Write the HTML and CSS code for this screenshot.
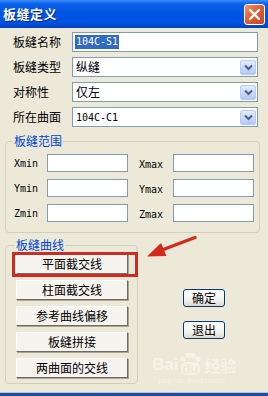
FILE: index.html
```html
<!doctype html>
<html lang="zh">
<head>
    <meta charset="UTF-8">
    <title>板缝定义</title>
	<link rel="stylesheet" href="styles.css">
</head>
<body>
	<div class="window">
		<div class="titlebar">
			<span class="title">板缝定义</span>
			<span class="close">
				<svg width="13" height="13" viewBox="0 0 13 13"><path d="M2 2 L11 11 M11 2 L2 11" stroke="#fff" stroke-width="2.4" stroke-linecap="round"/></svg>
			</span>
		</div>

		<div class="body">
			<div class="fields">
				<span class="flabel">板缝名称</span>
				<div class="edit"><span class="picked">104C-S1</span></div>
				<span class="flabel">板缝类型</span>
				<div class="edit combo"><span class="cn">纵缝</span><i class="drop"><svg width="9" height="7" viewBox="0 0 9 7"><path d="M1 1.5 L4.5 5 L8 1.5" fill="none" stroke="#4d6185" stroke-width="2"/></svg></i></div>
				<span class="flabel">对称性</span>
				<div class="edit combo"><span class="cn">仅左</span><i class="drop"><svg width="9" height="7" viewBox="0 0 9 7"><path d="M1 1.5 L4.5 5 L8 1.5" fill="none" stroke="#4d6185" stroke-width="2"/></svg></i></div>
				<span class="flabel">所在曲面</span>
				<div class="edit combo"><span class="mono">104C-C1</span><i class="drop"><svg width="9" height="7" viewBox="0 0 9 7"><path d="M1 1.5 L4.5 5 L8 1.5" fill="none" stroke="#4d6185" stroke-width="2"/></svg></i></div>
			</div>

			<fieldset class="group range">
				<legend>板缝范围</legend>
				<div class="range-grid">
					<span class="rlabel">Xmin</span><div class="box"></div>
					<span class="rlabel right">Xmax</span><div class="box"></div>
					<span class="rlabel">Ymin</span><div class="box"></div>
					<span class="rlabel right">Ymax</span><div class="box"></div>
					<span class="rlabel">Zmin</span><div class="box"></div>
					<span class="rlabel right">Zmax</span><div class="box"></div>
				</div>
			</fieldset>

			<div class="lower">
				<fieldset class="group curves">
					<legend>板缝曲线</legend>
					<div class="btn-list">
						<div class="marked">
							<button class="cbtn">平面截交线</button>
							<span class="mark"></span>
						</div>
						<button class="cbtn">柱面截交线</button>
						<button class="cbtn">参考曲线偏移</button>
						<button class="cbtn">板缝拼接</button>
						<button class="cbtn">两曲面的交线</button>
					</div>
				</fieldset>
				<div class="actions">
					<button class="xpbtn">确定</button>
					<button class="xpbtn">退出</button>
				</div>
			</div>
		</div>

		<div class="bottom-edge"></div>

		<!-- 红色箭头 -->
		<svg class="arrow" width="65" height="40" viewBox="0 0 65 40">
			<path d="M22 22 L55 9.5" stroke="#d42a1e" stroke-width="3.4" stroke-linecap="round"/>
			<polygon points="7,28.5 26.5,28 21,15" fill="#d42a1e"/>
		</svg>

		<!-- 水印 -->
		<div class="watermark">
			<div class="wm-logo">
				<span>Bai</span>
				<span class="paw">
					<svg width="22" height="10" viewBox="0 0 22 10"><circle cx="4" cy="7" r="2.6"/><circle cx="9" cy="3.5" r="2.8"/><circle cx="14" cy="3.5" r="2.8"/><circle cx="19" cy="7" r="2.6"/></svg>
					<b>du</b>
				</span>
				<span class="wm-cn">经验</span>
			</div>
			<div class="wm-url">jingyan.baidu.com</div>
		</div>
	</div>
</body>
</html>
```

FILE: styles.css
```css
*{margin:0;padding:0;}
body{
	background:#ece9d8;
	font-family:"Noto Sans CJK SC", "Liberation Sans", sans-serif;
	font-size:12px;
	color:#000;
}
.window{
	position:relative;
	width:268px;
	height:396px;
	display:flex;
	flex-direction:column;
	background:#ece9d8;
	overflow:hidden;
}
/* 标题栏 */
.titlebar{
	height:28px;
	display:flex;
	align-items:center;
	justify-content:space-between;
	padding:0 3px;
	box-sizing:border-box;
	background:linear-gradient(180deg,#3d8df6 0%,#0a61ea 14%,#0054e3 45%,#0052df 80%,#0041c4 100%);
}
.title{
	color:#fff;
	font-weight:bold;
	font-size:13px;
	line-height:16px;
	text-shadow:1px 1px 0 #0a2a80;
	letter-spacing:0.5px;
}
.close{
	width:21px;
	height:21px;
	box-sizing:border-box;
	border:1px solid #fff;
	border-radius:3px;
	background:linear-gradient(135deg,#f09a78 0%,#e2643c 40%,#c9431c 100%);
	display:flex;
	align-items:center;
	justify-content:center;
	margin-top:1px;
}
.body{
	padding-top:4px;
}
/* 上部字段 */
.fields{
	display:grid;
	grid-template-columns:59px 186px;
	grid-auto-rows:20px;
	row-gap:5px;
	padding-left:13px;
	align-items:center;
}
.flabel{
	line-height:14px;
}
.edit{
	height:20px;
	box-sizing:border-box;
	background:#fff;
	border:1px solid #7f9db9;
	display:flex;
	align-items:center;
	padding-left:2px;
}
.picked{
	background:#316ac5;
	color:#fff;
	font-family:"DejaVu Sans Mono", monospace;
	font-size:10px;
	line-height:14px;
	padding:0 1px;
}
.combo{
	justify-content:space-between;
	padding-left:3px;
	padding-right:1px;
}
.cn{
	line-height:14px;
}
.mono{
	font-family:"DejaVu Sans Mono", monospace;
	font-size:10px;
}
.drop{
	width:16px;
	height:15px;
	box-sizing:border-box;
	border:1px solid #b9cbf3;
	border-radius:2px;
	background:linear-gradient(180deg,#e3ecfd 0%,#c6d6fb 60%,#b3c8f5 100%);
	display:flex;
	align-items:center;
	justify-content:center;
}
/* 分组框 */
.group{
	border:1px solid #d0d0bf;
	border-radius:4px;
	box-sizing:border-box;
}
.group legend{
	color:#0046d5;
	line-height:14px;
	padding:0 1px;
	margin-left:-1px;
}
.range{
	margin:7px 8px 0 5px;
	padding:6px 5px 10px 8px;
}
.range-grid{
	display:grid;
	grid-template-columns:33px 81px 45px 81px;
	grid-auto-rows:18px;
	row-gap:7px;
	align-items:center;
}
.rlabel{
	font-family:"DejaVu Sans Mono", monospace;
	font-size:10px;
}
.rlabel.right{
	padding-left:11px;
	padding-top:3px;
}
.box{
	height:18px;
	box-sizing:border-box;
	background:#fff;
	border:1px solid #7f9db9;
}
/* 下部 */
.lower{
	display:flex;
	align-items:flex-start;
	margin-top:5px;
}
.curves{
	width:133px;
	margin-left:5px;
	padding:2px 0 5px 10px;
}
.btn-list{
	display:flex;
	flex-direction:column;
	gap:6px;
}
.marked{
	position:relative;
	height:20px;
}
.cbtn{
	width:112px;
	height:20px;
	font-family:"Noto Sans CJK SC", sans-serif;
	font-size:12px;
	line-height:14px;
	background:#f5f4ee;
	border:1px solid;
	border-color:#fdfdfb #6e6c62 #6e6c62 #fdfdfb;
	box-shadow:1px 1px 0 #a8a698;
	color:#000;
}
.mark{
	position:absolute;
	left:-4px;
	top:-2px;
	width:126px;
	height:25px;
	box-sizing:border-box;
	border:3px solid #cf2b22;
}
.actions{
	display:flex;
	flex-direction:column;
	gap:14px;
	margin-left:45px;
	padding-top:51px;
}
.xpbtn{
	width:42px;
	height:18px;
	font-family:"Noto Sans CJK SC", sans-serif;
	font-size:12px;
	line-height:14px;
	border:1px solid #003c74;
	border-radius:3px;
	background:linear-gradient(180deg,#ffffff 0%,#f3f3ef 60%,#dcd8cc 100%);
	color:#000;
}
.bottom-edge{
	margin-top:auto;
	height:3px;
	border-top:1px solid #b7c4dc;
	background:#234a9a;
}
.arrow{
	position:absolute;
	left:140px;
	top:228px;
}
.watermark{
	position:absolute;
	left:152px;
	top:352px;
	color:rgba(255,255,255,0.45);
}
.wm-logo{
	display:flex;
	align-items:flex-end;
	font-family:"Liberation Sans", sans-serif;
	font-weight:bold;
	font-size:17px;
	line-height:20px;
}
.paw{
	display:flex;
	flex-direction:column;
	align-items:center;
	margin:0 1px;
}
.paw svg{
	fill:rgba(255,255,255,0.45);
}
.paw b{
	font-size:13px;
	line-height:13px;
	padding:0 2px;
	border-radius:5px;
	background:rgba(255,255,255,0.4);
	color:#ece9d8;
}
.wm-cn{
	font-family:"Noto Sans CJK SC", sans-serif;
	font-size:16px;
	margin-left:2px;
}
.wm-url{
	font-family:"Liberation Serif", serif;
	font-size:9px;
	margin-left:6px;
}
```
